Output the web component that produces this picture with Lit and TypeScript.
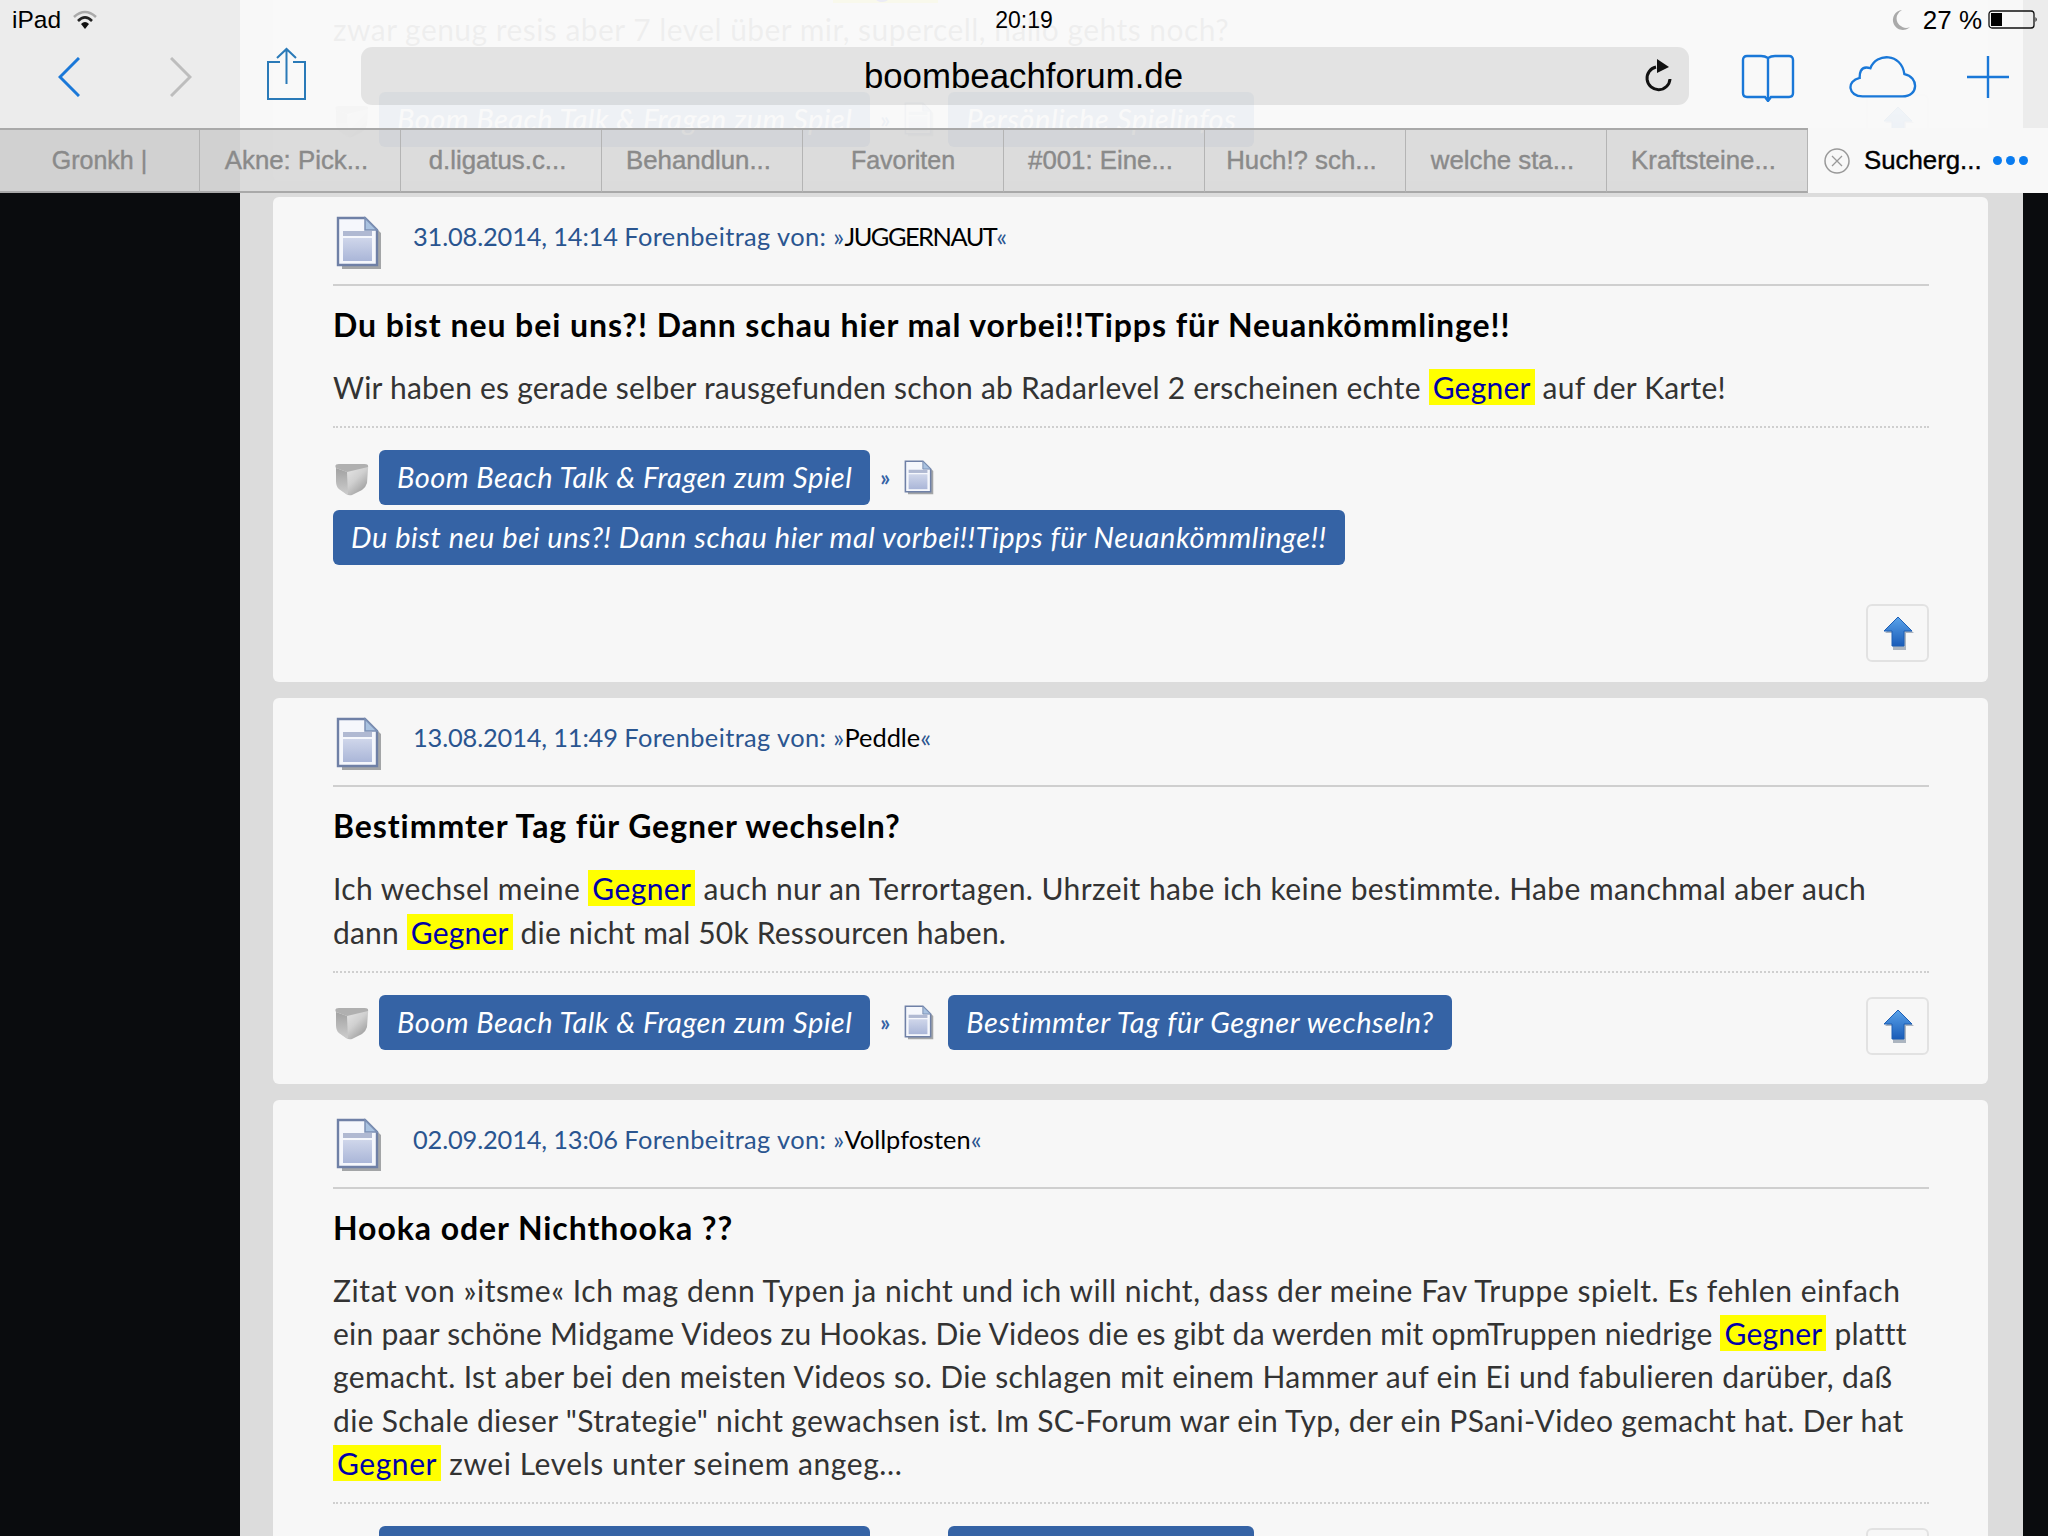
import { LitElement, html, css } from "lit";
import { customElement } from "lit/decorators.js";

const doc = (w: number, h: number) => html`<svg class="ico" width=${w} height=${h} viewBox="0 0 46 54">
  <defs><linearGradient id="dg" x1="0" y1="0" x2="0" y2="1"><stop offset="0" stop-color="#cfd6ea"/><stop offset="1" stop-color="#aab6d8"/></linearGradient></defs>
  <path d="M6 5H32L45 17V53H6Z" fill="#77797c" opacity=".65"/>
  <path d="M2 2H29L41 14V49H2Z" fill="#f5f7fc" stroke="#6f80a6" stroke-width="2.4"/>
  <path d="M29 2V14H41Z" fill="#a9c2e0" stroke="#7c90b4" stroke-width="1.5"/>
  <rect x="7" y="15" width="29" height="5" fill="#b0b9d2"/>
  <rect x="7" y="22" width="29" height="23" fill="url(#dg)"/>
</svg>`;

const cube = () => html`<svg class="ico" width="37" height="38" viewBox="0 0 37 38">
  <defs>
    <linearGradient id="cl" x1="0" y1="0" x2="0" y2="1"><stop offset="0" stop-color="#a2a2a2"/><stop offset="1" stop-color="#cdcdcd"/></linearGradient>
    <linearGradient id="cr" x1="0" y1="0" x2="1" y2="1"><stop offset="0" stop-color="#f4f4f4"/><stop offset=".55" stop-color="#d0d0d0"/><stop offset="1" stop-color="#8c8c8c"/></linearGradient>
  </defs>
  <path d="M3 9Q1 5 6 5H31Q36 5 35 10L34 24Q33 28 29 31L19 36Q16 37 13 35L6 30Q3 27 3 22Z" fill="url(#cr)"/>
  <path d="M3 9 14 13 15 36 6 30Q3 27 3 22Z" fill="url(#cl)"/>
  <path d="M3 9Q1 5 6 5H31Q36 5 35 8L14 13Z" fill="#b0b0b0"/>
</svg>`;

const arrow = () => html`<svg class="ico" width="32" height="34" viewBox="0 0 32 34">
  <defs><linearGradient id="ag" x1="0" y1="0" x2="0" y2="1"><stop offset="0" stop-color="#5aa3ea"/><stop offset="1" stop-color="#1a5cb8"/></linearGradient></defs>
  <path d="M16 2 31 16H23V33H10V16H2Z" fill="#6f7f94" opacity=".55" transform="translate(1 1)"/>
  <path d="M16 1 30 15H22V30H10V15H2Z" fill="url(#ag)" stroke="#1d5fb5" stroke-width="1"/>
</svg>`;

interface Line { s: number; t: unknown }
interface Post {
  date: string; user: string; userSpacing: number; title: string;
  lines: Line[]; crumb2: string; stacked?: boolean;
}

const hl = html`<mark class="hit">Gegner</mark>`;

const posts: Post[] = [
  {
    date: "31.08.2014, 14:14", user: "JUGGERNAUT", userSpacing: -1.5,
    title: "Du bist neu bei uns?! Dann schau hier mal vorbei!!Tipps für Neuankömmlinge!!",
    lines: [{ s: 0.22, t: html`Wir haben es gerade selber rausgefunden schon ab Radarlevel 2 erscheinen echte ${hl} auf der Karte!` }],
    crumb2: "Du bist neu bei uns?! Dann schau hier mal vorbei!!Tipps für Neuankömmlinge!!", stacked: true,
  },
  {
    date: "13.08.2014, 11:49", user: "Peddle", userSpacing: 0,
    title: "Bestimmter Tag für Gegner wechseln?",
    lines: [
      { s: 0.41, t: html`Ich wechsel meine ${hl} auch nur an Terrortagen. Uhrzeit habe ich keine bestimmte. Habe manchmal aber auch` },
      { s: 0.19, t: html`dann ${hl} die nicht mal 50k Ressourcen haben.` },
    ],
    crumb2: "Bestimmter Tag für Gegner wechseln?",
  },
  {
    date: "02.09.2014, 13:06", user: "Vollpfosten", userSpacing: 0,
    title: "Hooka oder Nichthooka ??",
    lines: [
      { s: 0.56, t: html`Zitat von »itsme« Ich mag denn Typen ja nicht und ich will nicht, dass der meine Fav Truppe spielt. Es fehlen einfach` },
      { s: 0.23, t: html`ein paar schöne Midgame Videos zu Hookas. Die Videos die es gibt da werden mit opmTruppen niedrige ${hl} plattt` },
      { s: 0.39, t: html`gemacht. Ist aber bei den meisten Videos so. Die schlagen mit einem Hammer auf ein Ei und fabulieren darüber, daß` },
      { s: 0.33, t: html`die Schale dieser "Strategie" nicht gewachsen ist. Im SC-Forum war ein Typ, der ein PSani-Video gemacht hat. Der hat` },
      { s: 0.56, t: html`${hl} zwei Levels unter seinem angeg...` },
    ],
    crumb2: "Persönliche Spielinfos",
  },
];

const tabs = ["Gronkh |", "Akne: Pick...", "d.ligatus.c...", "Behandlun...", "Favoriten", "#001: Eine...", "Huch!? sch...", "welche sta...", "Kraftsteine..."];

@customElement("app-root")
export class AppRoot extends LitElement {
  static styles = css`
    :host { display: block; width: 2048px; height: 1536px; position: relative; overflow: hidden; background: #0a0c0e; font-family: "Lato", "Liberation Sans", sans-serif; }
    .ico { filter: blur(.6px); display: block; flex: none; }
    .column { margin-left: 240px; width: 1783px; height: 1536px; overflow: hidden; background: #dcdcdc; padding: 0 35px 0 33px; box-sizing: border-box; }
    .card { background: #f7f7f7; border-radius: 6px; padding: 0 59px 0 60px; margin-bottom: 16px; }
    .card.ghost { padding-top: 8px; height: 181px; box-sizing: border-box; border-radius: 0 0 6px 6px; }
    .ghost .foot { border-top: 0; margin-top: 19px; padding-top: 22px; }
    .ghost .prev { margin-top: -44.5px; padding-left: 500px; }
    .ghost .now { letter-spacing: .45px; margin-top: 1.2px; }
    .head { height: 87px; padding: 0 0 9px 3px; box-sizing: border-box; display: flex; align-items: center; gap: 31px; font-size: 25.4px; color: #2a5590; white-space: nowrap; }
    .head .ico { margin-top: 13px; }
    .head b { font-weight: 400; color: #000; }
    .stamp { letter-spacing: -.15px; }
    .by { letter-spacing: .4px; }
    .rule { height: 2px; background: #cfcfcf; }
    .title { font-size: 32px; letter-spacing: .93px; font-weight: 700; color: #000; line-height: 40px; margin-top: 19px; margin-bottom: 21px; white-space: nowrap; }
    .text { font-size: 30px; color: #333; white-space: nowrap; }
    .text div { height: 43.3px; line-height: 43.3px; }
    .hit { background: #ff0; color: #0000a8; padding: 0 4px; }
    .foot { border-top: 2px dotted #cfcfcf; margin-top: 17px; padding-top: 22px; padding-bottom: 29px; display: flex; justify-content: space-between; align-items: flex-start; flex-wrap: wrap; }
    .foot.stacked { padding-bottom: 20px; }
    .crumbs { display: flex; flex-wrap: wrap; align-items: center; gap: 5px 0; max-width: 1596px; }
    .stacked .crumbs { flex-basis: 100%; }
    .stacked .up { margin: 39px 0 0 auto; }
    .btn { height: 55px; line-height: 54px; padding: 0 18px; background: #3563a5; color: #fff; border-radius: 6px; font-style: italic; font-size: 29px; letter-spacing: .46px; white-space: nowrap; box-sizing: border-box; }
    .btn.long { letter-spacing: .56px; }
    .cube { margin-right: 9px; display: flex; }
    .sep { color: #3563a5; font-size: 22px; font-weight: 700; margin: 0 14px 0 10px; }
    .docsm { margin-right: 14px; display: flex; }
    .up { width: 63px; height: 58px; margin-top: 2px; border: 2px solid #e2e2e2; border-radius: 6px; box-sizing: border-box; display: flex; align-items: center; justify-content: center; }

    .bar { position: absolute; left: 0; top: 0; width: 2048px; height: 193px; color: #000; font-family: "Liberation Sans", sans-serif; background: rgba(249,249,249,.95); display: flex; flex-direction: column; }
    .status { height: 40px; position: relative; display: flex; align-items: center; padding: 0 10px 0 12px; font-size: 24.5px; gap: 11px; flex: none; }
    .clock { position: absolute; left: 50%; transform: translateX(-50%); font-size: 23px; }
    .right { margin-left: auto; display: flex; align-items: center; gap: 6px; }
    .pct { font-size: 26px; margin-left: 6px; }
    .nav { height: 88px; flex: none; display: flex; align-items: center; position: relative; padding-left: 58px; }
    .nav svg { display: block; flex: none; }
    .back { margin-top: -14px; }
    .fwd { margin: -14px 0 0 90px; }
    .share { margin: -20px 0 0 75px; }
    .addr { margin-left: 54px; width: 1328px; height: 58px; margin-top: -16px; padding-right: 3px; box-sizing: border-box; border-radius: 11px; background: rgba(0,0,0,.085); display: flex; align-items: center; justify-content: center; position: relative; font-size: 34.8px; }
    .reload { position: absolute; right: 15px; top: 11px; }
    .book { margin: -12px 0 0 52px; }
    .cloud { margin: -14px 0 0 54px; }
    .plus { margin: -14px 0 0 50px; }
    .tabs { height: 65px; flex: none; display: flex; border-top: 2px solid #a9a9a9; box-sizing: border-box; }
    .tab { width: 201px; flex: none; display: flex; align-items: center; justify-content: center; font-size: 25.8px; -webkit-text-stroke: .4px currentColor; color: #8a8a8a; background: rgba(0,0,0,.115); border-right: 1px solid #b4b4b4; border-bottom: 2px solid #a9a9a9; box-sizing: border-box; white-space: nowrap; }
    .tab.first { width: 200px; font-size: 25px; }
    .tab.cut { padding-right: 7px; }
    .tab.plain { font-size: 25px; }
    .tab.active { flex: 1; margin-top: -2px; background: #f8f8f8; color: #000; border: 0; justify-content: flex-start; padding-left: 16px; gap: 14px; }
    .dots { display: flex; gap: 4px; margin-left: -3px; }
    .dots i { width: 9px; height: 9px; border-radius: 50%; background: #0a7cf0; display: block; }
  `;

  private crumbs(label: string) {
    return html`<div class="crumbs">
      <span class="cube">${cube()}</span>
      <span class="btn">Boom Beach Talk &amp; Fragen zum Spiel</span>
      <span class="sep">»</span>
      <span class="docsm">${doc(30, 35)}</span>
      <span class="btn long">${label}</span>
    </div>`;
  }

  private post(p: Post) {
    return html`<article class="card">
      <div class="head">${doc(46, 54)}<span><span class="stamp">${p.date}</span> <span class="by">Forenbeitrag von: »</span><b style="letter-spacing:${p.userSpacing}px">${p.user}</b>«</span></div>
      <div class="rule"></div>
      <div class="title">${p.title}</div>
      <div class="text">${p.lines.map((l) => html`<div style="letter-spacing:${l.s}px">${l.t}</div>`)}</div>
      <div class="foot ${p.stacked ? "stacked" : ""}">
        ${this.crumbs(p.crumb2)}
        <div class="up">${arrow()}</div>
      </div>
    </article>`;
  }

  render() {
    return html`
      <div class="column">
        <article class="card ghost">
          <div class="text">
            <div class="prev">${hl}</div>
            <div class="now">zwar genug resis aber 7 level über mir, supercell, hallo gehts noch?</div>
          </div>
          <div class="foot">${this.crumbs("Persönliche Spielinfos")}<div class="up">${arrow()}</div></div>
        </article>
        ${posts.map((p) => this.post(p))}
      </div>
      <header class="bar">
        <div class="status">
          <span>iPad</span>
          <svg width="26" height="20" viewBox="0 0 26 20"><path d="M2 7Q13-3 24 7" fill="none" stroke="#aaa" stroke-width="2.6"/><path d="M6 11Q13 4 20 11" fill="none" stroke="#222" stroke-width="2.6"/><path d="M9 14Q13 10 17 14L13 19Z" fill="#111"/></svg>
          <span class="clock">20:19</span>
          <span class="right">
            <svg width="20" height="24" viewBox="0 0 20 24"><path d="M11 2A10 10 0 1 0 19 19A9 9 0 0 1 11 2Z" fill="#aaa"/></svg>
            <span class="pct">27 %</span>
            <svg width="50" height="20" viewBox="0 0 50 20"><rect x="1" y="1" width="45" height="17" rx="3" fill="none" stroke="#111" stroke-width="1.3"/><rect x="3" y="3" width="11" height="13" fill="#000"/><path d="M47.500 7Q50 9.500 47.500 12Z" fill="#111"/></svg>
          </span>
        </div>
        <div class="nav">
          <svg class="back" width="22" height="40" viewBox="0 0 22 40"><path d="M21 1 2 20 21 39" fill="none" stroke="#1a78d8" stroke-width="3"/></svg>
          <svg class="fwd" width="22" height="40" viewBox="0 0 22 40"><path d="M1 1 20 20 1 39" fill="none" stroke="#bdbdbd" stroke-width="3"/></svg>
          <svg class="share" width="40" height="54" viewBox="0 0 40 54"><path d="M13 15H1V52H38V15H26" fill="none" stroke="#2a7ab8" stroke-width="2"/><path d="M19.500 37V2M10 11 19.500 2 29 11" fill="none" stroke="#2a7ab8" stroke-width="2"/></svg>
          <div class="addr">boombeachforum.de
            <svg class="reload" width="30" height="34" viewBox="0 0 30 34"><path d="M12 8A11.500 11.500 0 1 0 26 20" fill="none" stroke="#111" stroke-width="3" transform="translate(0 1)"/><path d="M13 1 25 9 13 15Z" fill="#111"/></svg>
          </div>
          <svg class="book" width="54" height="48" viewBox="0 0 54 48"><path d="M27 4Q24 2 20 2H6Q2 2 2 6V39Q2 43 6 43H24L27 47 30 43H48Q52 43 52 39V6Q52 2 48 2H34Q30 2 27 4ZM27 4V46" fill="none" stroke="#1a78d8" stroke-width="2.4"/></svg>
          <svg class="cloud" width="68" height="44" viewBox="0 0 70 44"><path d="M14 42H55C72 42 72 22 57 19C54 -3 28 -3 22 13C10 9 11 22 11 23C-3 26 -1 42 14 42Z" fill="none" stroke="#1a78d8" stroke-width="2.4"/></svg>
          <svg class="plus" width="42" height="42" viewBox="0 0 42 42"><path d="M21 0V42M0 21H42" fill="none" stroke="#1a78d8" stroke-width="2.4"/></svg>
        </div>
        <nav class="tabs">
          ${tabs.map((t, i) => html`<div class="tab ${i === 0 ? "first" : t.endsWith("...") ? "cut" : "plain"}">${t}</div>`)}
          <div class="tab active">
            <svg width="26" height="26" viewBox="0 0 26 26"><circle cx="13" cy="13" r="12" fill="none" stroke="#999" stroke-width="1.5"/><path d="M8 8 18 18M18 8 8 18" stroke="#999" stroke-width="1.3"/></svg>
            <span>Sucherg...</span>
            <span class="dots"><i></i><i></i><i></i></span>
          </div>
        </nav>
      </header>
    `;
  }
}
